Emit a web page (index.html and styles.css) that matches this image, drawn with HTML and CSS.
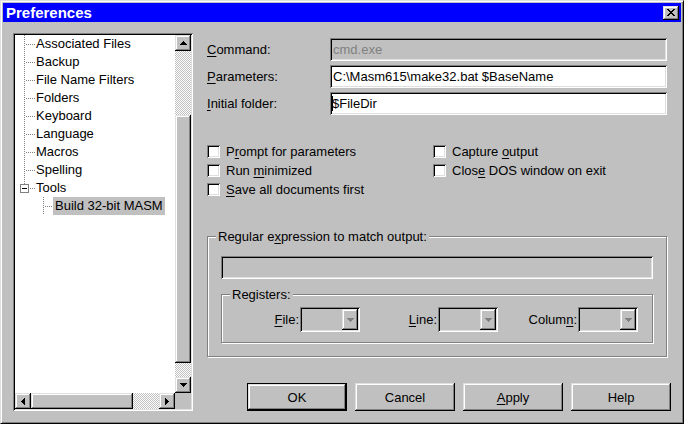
FILE: index.html
```html
<!DOCTYPE html>
<html>
<head>
<meta charset="utf-8">
<title>Preferences</title>
<link rel="stylesheet" href="styles.css">
</head>
<body>
<div class="window">
  <div class="titlebar">
    <span class="title">Preferences</span>
    <div class="close raised">
      <svg width="8" height="7" viewBox="0 0 8 7"><path fill="#000" d="M0 0h2v1H0zM6 0h2v1H6zM1 1h2v1H1zM5 1h2v1H5zM2 2h4v1H2zM3 3h2v1H3zM2 4h4v1H2zM1 5h2v1H1zM5 5h2v1H5zM0 6h2v1H0zM6 6h2v1H6z"/></svg>
    </div>
  </div>
  <div class="content">
    <div class="tree sunken">
      <ul class="tree-list">
        <li class="node">Associated Files</li>
        <li class="node">Backup</li>
        <li class="node">File Name Filters</li>
        <li class="node">Folders</li>
        <li class="node">Keyboard</li>
        <li class="node">Language</li>
        <li class="node">Macros</li>
        <li class="node">Spelling</li>
        <li class="node parent"><span class="expander"></span><span>Tools</span></li>
        <li class="node child"><span class="selected">Build 32-bit MASM</span></li>
      </ul>
      <div class="vscroll">
        <div class="sbtn raised"><svg width="7" height="4" viewBox="0 0 7 4"><path d="M3 0h1v1h1v1h1v1h1v1H0V3h1V2h1V1h1z"/></svg></div>
        <div class="track track-top"></div>
        <div class="vthumb raised"></div>
        <div class="track fill"></div>
        <div class="sbtn raised"><svg width="7" height="4" viewBox="0 0 7 4"><path d="M0 0h7v1h-1v1h-1v1h-1v1h-1v-1h-1v-1h-1v-1H0z"/></svg></div>
      </div>
      <div class="hscroll">
        <div class="sbtn raised"><svg width="4" height="7" viewBox="0 0 4 7"><path d="M3 0h1v7h-1v-1h-1v-1h-1v-1H0V3h1V2h1V1h1z"/></svg></div>
        <div class="hthumb raised"></div>
        <div class="track fill"></div>
        <div class="sbtn raised"><svg width="4" height="7" viewBox="0 0 4 7"><path d="M0 0h1v1h1v1h1v1h1v1H3v1H2v1H1v1H0z"/></svg></div>
      </div>
      <div class="corner"></div>
    </div>

    <div class="panel">
      <div class="fields">
        <div class="field-row">
          <span class="label"><u>C</u>ommand:</span>
          <div class="input sunken disabled"><span>cmd.exe</span></div>
        </div>
        <div class="field-row">
          <span class="label"><u>P</u>arameters:</span>
          <div class="input sunken"><span>C:\Masm615\make32.bat $BaseName</span></div>
        </div>
        <div class="field-row">
          <span class="label"><u>I</u>nitial folder:</span>
          <div class="input sunken"><span class="caret"></span><span>$FileDir</span></div>
        </div>
      </div>

      <div class="checks">
        <div class="check"><span class="box sunken"></span><span>P<u>r</u>ompt for parameters</span></div>
        <div class="check"><span class="box sunken"></span><span>Capture <u>o</u>utput</span></div>
        <div class="check"><span class="box sunken"></span><span>Run <u>m</u>inimized</span></div>
        <div class="check"><span class="box sunken"></span><span>Clos<u>e</u> DOS window on exit</span></div>
        <div class="check"><span class="box sunken"></span><span><u>S</u>ave all documents first</span></div>
      </div>

      <fieldset class="group">
        <legend>Regular e<u>x</u>pression to match output:</legend>
        <div class="input sunken disabled regex"></div>
        <fieldset class="group registers">
          <legend>Registers:</legend>
          <div class="reg-grid">
            <span class="reg-label"><u>F</u>ile:</span>
            <div class="combo sunken"><span class="drop raised"><svg width="7" height="4" viewBox="0 0 7 4"><path d="M0 0h7v1h-1v1h-1v1h-1v1h-1v-1h-1v-1h-1v-1H0z"/></svg></span></div>
            <span class="reg-label"><u>L</u>ine:</span>
            <div class="combo sunken"><span class="drop raised"><svg width="7" height="4" viewBox="0 0 7 4"><path d="M0 0h7v1h-1v1h-1v1h-1v1h-1v-1h-1v-1h-1v-1H0z"/></svg></span></div>
            <span class="reg-label">Colum<u>n</u>:</span>
            <div class="combo sunken"><span class="drop raised"><svg width="7" height="4" viewBox="0 0 7 4"><path d="M0 0h7v1h-1v1h-1v1h-1v1h-1v-1h-1v-1h-1v-1H0z"/></svg></span></div>
          </div>
        </fieldset>
      </fieldset>

      <div class="buttons">
        <div class="btn raised default">OK</div>
        <div class="btn raised">Cancel</div>
        <div class="btn raised"><span><u>A</u>pply</span></div>
        <div class="btn raised">Help</div>
      </div>
    </div>
  </div>
</div>
</body>
</html>
```

FILE: styles.css
```css
* { box-sizing: border-box; }

html, body {
  margin: 0;
  padding: 0;
  background: #c0c0c0;
}

body {
  font-family: "Liberation Sans", Arial, sans-serif;
  font-size: 13px;
  color: #000;
}

u { text-decoration: underline; text-underline-offset: 2px; }

.raised {
  background: #c0c0c0;
  box-shadow: inset -1px -1px #000, inset 1px 1px #dfdfdf, inset -2px -2px #808080, inset 2px 2px #fff;
}

.sunken {
  box-shadow: inset 1px 1px #808080, inset -1px -1px #fff, inset 2px 2px #000, inset -2px -2px #dfdfdf;
}

.window {
  width: 684px;
  height: 424px;
  padding: 2px;
  border: 1px solid;
  border-color: #dfdfdf #000 #000 #dfdfdf;
  box-shadow: inset 1px 1px #fff, inset -1px -1px #808080;
  background: #c0c0c0;
  display: flex;
  flex-direction: column;
}

.titlebar {
  height: 19px;
  background: #0000ff;
  display: flex;
  align-items: center;
  justify-content: space-between;
  padding: 0 2px 0 3px;
}

.title {
  color: #fff;
  font-weight: bold;
  font-size: 15px;
  line-height: 19px;
}

.close {
  width: 16px;
  height: 14px;
  display: flex;
  align-items: center;
  justify-content: center;
  padding: 0 1px 1px 0;
}
.close svg { display: block; }

.content {
  display: flex;
  padding: 11px 0 0 10px;
}

/* Tree view */
.tree {
  width: 180px;
  height: 378px;
  padding: 2px;
  background: #fff;
  display: grid;
  grid-template-columns: 160px 16px;
  grid-template-rows: 358px 16px;
}

.tree-list {
  list-style: none;
  margin: 0;
  padding: 0;
  overflow: hidden;
}

.node {
  height: 18px;
  line-height: 18px;
  padding-left: 21px;
  white-space: nowrap;
  display: flex;
  align-items: center;
  background-image:
    repeating-linear-gradient(to bottom, #808080 0 1px, transparent 1px 2px),
    repeating-linear-gradient(to right, #808080 0 1px, transparent 1px 2px);
  background-size: 1px 18px, 9px 1px;
  background-position: 9px 0, 11px 9px;
  background-repeat: no-repeat;
}

.node.parent {
  padding-left: 5px;
  background-size: 1px 5px, 5px 1px;
  background-position: 9px 0, 15px 9px;
}

.expander {
  width: 9px;
  height: 9px;
  border: 1px solid #808080;
  background: linear-gradient(#000, #000) center / 5px 1px no-repeat, #fff;
  margin-right: 7px;
}

.node.child {
  padding-left: 38px;
  background-size: 1px 18px, 9px 1px;
  background-position: 28px 0, 30px 9px;
}

.selected {
  background: #c0c0c0;
  padding: 0 2px;
  line-height: 18px;
}

.vscroll {
  display: flex;
  flex-direction: column;
}

.hscroll {
  display: flex;
}

.sbtn {
  width: 16px;
  height: 16px;
  flex: none;
  display: flex;
  align-items: center;
  justify-content: center;
}
.sbtn svg { display: block; fill: #000; }

.track {
  background: repeating-conic-gradient(#fff 0 25%, #c0c0c0 0 50%) 0 0 / 2px 2px;
}
.track-top { height: 64px; flex: none; }
.fill { flex: 1; }

.vthumb { height: 248px; flex: none; }
.hthumb { width: 102px; flex: none; }

.corner { background: #c0c0c0; }

/* Right panel */
.panel {
  width: 460px;
  margin-left: 14px;
  display: flex;
  flex-direction: column;
}

.fields {
  margin-top: 5px;
  display: flex;
  flex-direction: column;
  gap: 4px;
}

.field-row {
  display: flex;
  align-items: center;
  height: 23px;
}

.label {
  width: 123px;
  flex: none;
}

.input {
  flex: 1;
  height: 23px;
  background: #fff;
  padding: 0 2px 0 3px;
  line-height: 23px;
  white-space: pre;
  display: flex;
  align-items: center;
}

.input.disabled {
  background: #c0c0c0;
  color: #808080;
}

.caret {
  width: 1px;
  height: 15px;
  background: #000;
  margin-right: -1px;
  margin-left: -1px;
}

.checks {
  margin-top: 27px;
  display: grid;
  grid-template-columns: 226px 1fr;
  grid-auto-rows: 19px;
}

.check {
  display: flex;
  align-items: center;
  white-space: nowrap;
}

.box {
  width: 13px;
  height: 13px;
  background: #fff;
  margin-right: 6px;
  flex: none;
}

.group {
  margin: 30px 0 0 0;
  padding: 12px 13px 13px 13px;
  border: 1px solid #808080;
  box-shadow: inset 1px 1px #fff, 1px 1px #fff;
  min-width: 0;
}

.group legend {
  padding: 0 2px;
  margin-left: -5px;
  line-height: 15px;
  background: #c0c0c0;
}

.regex {
  flex: none;
  width: 100%;
}

.registers {
  margin-top: 8px;
  padding: 5px 0 10px 0;
}

.registers legend {
  margin-left: 8px;
}

.reg-grid {
  display: grid;
  grid-template-columns: 78px 60px 78px 60px 80px 60px;
  align-items: center;
}

.reg-label {
  text-align: right;
  padding-right: 1px;
}

.combo {
  height: 25px;
  background: #c0c0c0;
  display: flex;
  justify-content: flex-end;
  align-items: stretch;
  padding: 2px;
}

.drop {
  width: 16px;
  display: flex;
  align-items: center;
  justify-content: center;
}
.drop svg { display: block; fill: #808080; }

.buttons {
  margin-top: 26px;
  margin-right: -4px;
  display: flex;
  justify-content: flex-end;
  gap: 8px;
}

.btn {
  width: 100px;
  height: 28px;
  display: flex;
  align-items: center;
  justify-content: center;
}

.btn.default {
  border: 1px solid #000;
}
```
